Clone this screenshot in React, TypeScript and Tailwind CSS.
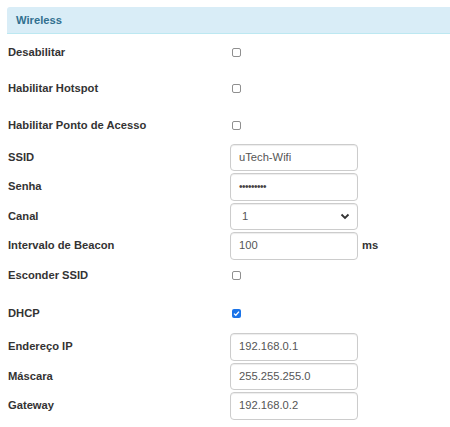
import React from "react";

function Check({ checked = false }: { checked?: boolean }) {
  if (checked) {
    return (
      <span className="ml-[2px] flex h-[9px] w-[9px] items-center justify-center rounded-[2px] bg-[#1a73e8]">
        <svg width="7" height="7" viewBox="0 0 7 7">
          <path d="M1 3.6 L2.8 5.3 L6 1.6" fill="none" stroke="#fff" strokeWidth="1.3" />
        </svg>
      </span>
    );
  }
  return <span className="ml-[2px] block h-[9px] w-[9px] rounded-[2px] border border-[#8f8f8f] bg-white" />;
}

function Field({ children }: { children: React.ReactNode }) {
  return (
    <div className="flex h-[27.5px] w-[128px] items-center rounded-[4px] border border-[#ccc] bg-white pl-[8px] text-[11.2px] text-[#555] shadow-[inset_0_1px_1px_rgba(0,0,0,0.075)]">
      {children}
    </div>
  );
}

function CheckRow({ label, checked, h, pt }: { label: string; checked?: boolean; h: string; pt?: string }) {
  return (
    <div className={`flex items-center ${h} ${pt ?? ""}`}>
      <div className="w-[222px] font-bold">{label}</div>
      <Check checked={checked} />
    </div>
  );
}

function InputRow({ label, children, suffix }: { label: string; children: React.ReactNode; suffix?: string }) {
  return (
    <div className="flex h-[29.5px] items-start">
      <div className="flex h-[27.5px] w-[222px] items-center font-bold">{label}</div>
      <Field>{children}</Field>
      {suffix && <div className="flex h-[27.5px] items-center pl-[4px] font-bold">{suffix}</div>}
    </div>
  );
}

export default function App() {
  return (
    <div
      className="h-[427px] w-[450px] overflow-hidden bg-white text-[11.2px] text-[#333]"
      style={{ fontFamily: '"Liberation Sans", Arial, sans-serif' }}
    >
      <div className="pt-[7px] pl-[7px]">
        <div className="flex h-[27px] items-center rounded-tl-[3px] border-b border-[#bce8f1] bg-[#d9edf7] pl-[9px] font-bold text-[#31708f]">
          Wireless
        </div>
      </div>
      <div className="pl-[8px]">
        <CheckRow label="Desabilitar" h="h-[36.5px]" />
        <CheckRow label="Habilitar Hotspot" h="h-[36.5px]" />
        <CheckRow label="Habilitar Ponto de Acesso" h="h-[36.5px]" />
        <InputRow label="SSID">uTech-Wifi</InputRow>
        <InputRow label="Senha">
          <span className="text-[10px] tracking-[-0.5px] text-[#444]">•••••••••</span>
        </InputRow>
        <InputRow label="Canal">
          <div className="flex w-full items-center justify-between pr-[7px] pl-[3px]">
            <span>1</span>
            <svg width="10" height="7" viewBox="0 0 10 7">
              <path d="M1.5 1.5 L5 5 L8.5 1.5" fill="none" stroke="#333" strokeWidth="1.8" />
            </svg>
          </div>
        </InputRow>
        <InputRow label="Intervalo de Beacon" suffix="ms">100</InputRow>
        <CheckRow label="Esconder SSID" h="h-[27px]" />
        <CheckRow label="DHCP" checked h="h-[44.5px]" pt="pt-[5px]" />
        <InputRow label="Endereço IP">192.168.0.1</InputRow>
        <InputRow label="Máscara">255.255.255.0</InputRow>
        <InputRow label="Gateway">192.168.0.2</InputRow>
      </div>
    </div>
  );
}
